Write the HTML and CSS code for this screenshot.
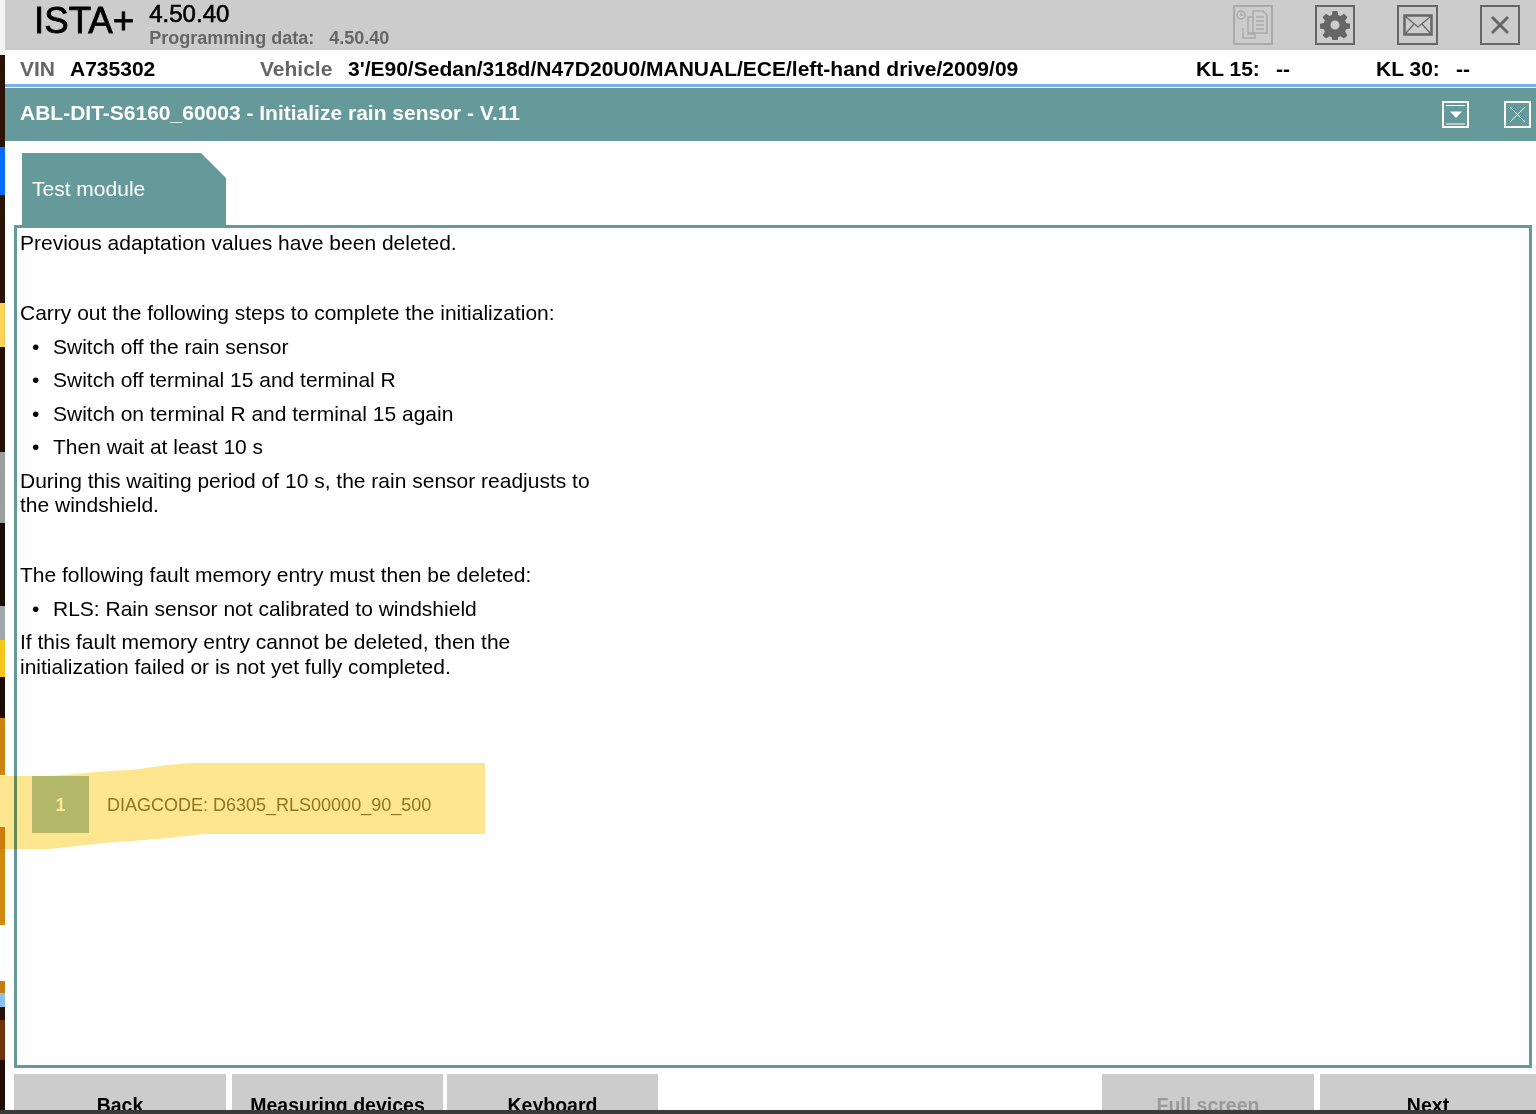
FILE: index.html
```html
<!DOCTYPE html>
<html lang="en">
<head>
<meta charset="utf-8">
<title>ISTA+</title>
<link rel="stylesheet" href="styles.css">
</head>
<body>
<div class="desktop">
  <aside class="wallpaper"></aside>
  <main class="window">
    <header class="topbar">
      <div class="brand">ISTA+</div>
      <div class="version">
        <div class="version-main">4.50.40</div>
        <div class="version-sub"><span>Programming data:</span><span>4.50.40</span></div>
      </div>
      <nav class="tools">
        <button class="tool tool-disabled" aria-label="History">
          <svg viewBox="0 0 36 36" width="36" height="36" fill="none" stroke="#aaa" stroke-width="1.5">
            <circle cx="6" cy="8" r="4"/><path d="M6 5.500V8h2.500"/>
            <path d="M18 4h10l4 4v18H18zM21 10h8M21 14h8M21 18h8M21 22h8"/>
            <path d="M18 10h-5v16h5M13 26v1h7"/>
            <path d="M8 21v10h12v-4"/>
          </svg>
        </button>
        <button class="tool" aria-label="Settings">
          <svg viewBox="0 0 32 32" width="30" height="30" fill="#666">
            <path fill-rule="evenodd" d="M13.400 1h5.200l.8 4.300 2.600 1.100 3.600-2.500 3.700 3.700-2.500 3.600 1.100 2.600 4.300.8v5.200l-4.300.8-1.100 2.600 2.500 3.600-3.700 3.700-3.600-2.500-2.600 1.100-.8 4.300h-5.200l-.8-4.300-2.600-1.100-3.600 2.500-3.700-3.700 2.500-3.600-1.100-2.600-4.300-.8v-5.200l4.300-.8 1.100-2.600-2.500-3.600 3.700-3.700 3.600 2.500 2.600-1.100zM16 11.200a4.800 4.800 0 1 0 0 9.600a4.800 4.800 0 0 0 0-9.600z"/>
          </svg>
        </button>
        <button class="tool tool-wide" aria-label="Mail">
          <svg viewBox="0 0 30 22" width="30" height="22" fill="none" stroke="#666">
            <rect x="1.500" y="1.500" width="27" height="19" stroke-width="2.500"/>
            <path d="M3 3l12 10L27 3M3 19l8-9M27 19l-8-9" stroke-width="1.200"/>
          </svg>
        </button>
        <button class="tool" aria-label="Close">
          <svg viewBox="0 0 20 20" width="20" height="20" fill="none" stroke="#666" stroke-width="3">
            <path d="M2 2l16 16M18 2L2 18"/>
          </svg>
        </button>
      </nav>
    </header>

    <section class="infobar">
      <span class="label vin-label">VIN</span><span class="value vin-value">A735302</span>
      <span class="label vehicle-label">Vehicle</span><span class="value vehicle-value">3'/E90/Sedan/318d/N47D20U0/MANUAL/ECE/left-hand drive/2009/09</span>
      <span class="value kl15">KL 15:</span><span class="value kl15-value">--</span>
      <span class="value kl30">KL 30:</span><span class="value">--</span>
    </section>

    <section class="titlebar">
      <h1 class="title">ABL-DIT-S6160_60003 - Initialize rain sensor - V.11</h1>
      <div class="title-actions">
        <span class="title-btn">
          <svg viewBox="0 0 23 23" width="23" height="23" fill="none" stroke="#fff">
            <path d="M2 2.500h19M2 21h19"/>
            <path d="M6 8.500h12l-6 6.500z" fill="#fff" stroke="none"/>
          </svg>
        </span>
        <span class="title-btn">
          <svg viewBox="0 0 23 23" width="23" height="23" fill="none" stroke="#fff">
            <path d="M4 4l15 15M19 4L4 19"/>
          </svg>
        </span>
      </div>
    </section>

    <section class="content">
      <div class="tab">Test module</div>
      <article class="panel">
        <p class="line">Previous adaptation values have been deleted.</p>
        <p class="line gap-large">Carry out the following steps to complete the initialization:</p>
        <ul class="steps">
          <li>Switch off the rain sensor</li>
          <li>Switch off terminal 15 and terminal R</li>
          <li>Switch on terminal R and terminal 15 again</li>
          <li>Then wait at least 10 s</li>
        </ul>
        <p class="line">During this waiting period of 10 s, the rain sensor readjusts to<br>the windshield.</p>
        <p class="line gap-large">The following fault memory entry must then be deleted:</p>
        <ul class="steps">
          <li>RLS: Rain sensor not calibrated to windshield</li>
        </ul>
        <p class="line">If this fault memory entry cannot be deleted, then the<br>initialization failed or is not yet fully completed.</p>
        <div class="code-row">
          <span class="code-num">1</span>
          <span class="code-text">DIAGCODE: D6305_RLS00000_90_500</span>
        </div>
      </article>
      <footer class="actions">
        <button class="action">Back</button>
        <button class="action">Measuring devices</button>
        <button class="action action-tight">Keyboard</button>
        <span class="spacer"></span>
        <button class="action action-disabled">Full screen</button>
        <button class="action action-next">Next</button>
      </footer>
    </section>
  </main>
  <svg class="highlight" viewBox="0 0 486 90" width="486" height="90">
    <path d="M0 13H48C70 12 100 8 130 7 150 5 165 1 195 0H485V71H205C185 73 160 76 130 78 100 80 70 84 48 86H0z" fill="#fde68f"/>
  </svg>
  <div class="taskbar"></div>
</div>
</body>
</html>
```

FILE: styles.css
```css
* { box-sizing: border-box; }
html, body { margin: 0; height: 100%; overflow: hidden; background: #fff; }
body { font-family: "Liberation Sans", Arial, sans-serif; color: #000; }

.desktop { position: relative; display: flex; width: 1536px; height: 1114px; overflow: hidden; }

.wallpaper {
  flex: 0 0 5px;
  background: linear-gradient(180deg,
    #f4f4f4 0 55px, #2a1206 55px 147px, #0a6cff 147px 195px, #2a1206 195px 303px,
    #ffd25a 303px 347px, #241005 347px 452px, #9aa0a0 452px 523px, #1c0b02 523px 606px,
    #a0a8aa 606px 640px, #f5c518 640px 677px, #1c0b02 677px 718px, #c98410 718px 775px,
    #fff 775px 827px, #d08a10 827px 925px, #fff 925px 981px, #c47c12 981px 993px,
    #8cc0f5 993px 1007px, #2a1206 1007px 1020px, #6a3508 1020px 1060px, #200c02 1060px 1114px);
}

.window { flex: 1; display: flex; flex-direction: column; min-width: 0; background: #fff; }

.topbar { display: flex; align-items: flex-start; flex: none; height: 50px; background: #ccc; padding-left: 29px; }
.brand { font-size: 36.700px; line-height: 42px; -webkit-text-stroke: .8px #000; margin-right: 15px; }
.version { padding-top: 2px; font-weight: bold; }
.version-main { font-size: 24px; line-height: 24px; font-weight: normal; -webkit-text-stroke: .6px #000; }
.version-sub { display: flex; gap: 15px; margin-top: 2px; font-size: 18px; line-height: 21px; color: #666; }
.tools { display: flex; gap: 42px; margin-left: auto; padding: 5px 16px 0 0; }
.tool {
  display: flex; align-items: center; justify-content: center;
  width: 40px; height: 40px; padding: 0; background: transparent;
  border: 2px solid #666;
}
.tool-wide { width: 41px; }
.tool-disabled { border-color: #aaa; }

.infobar {
  display: flex; align-items: center; flex: none; height: 38px; padding: 4px 0 3px 15px;
  font-size: 21px; font-weight: bold;
  border-bottom: 1px solid #fff;
  box-shadow: inset 0 -3px 0 #78aff0;
}
.label { color: #666; }
.vin-label { width: 50px; }
.vin-value { width: 190px; }
.vehicle-label { width: 88px; }
.vehicle-value { width: 848px; }
.kl15 { width: 80px; }
.kl15-value { width: 100px; }
.kl30 { width: 80px; }

.titlebar { display: flex; align-items: center; flex: none; height: 53px; padding: 0 5px 0 15px; background: #669999; color: #fff; }
.title { margin: 0 0 4px; font-size: 21px; font-weight: bold; }
.title-actions { display: flex; gap: 35px; margin-left: auto; }
.title-btn { display: flex; align-items: center; justify-content: center; width: 27px; height: 27px; border: 2px solid #fff; }

.content { flex: 1; display: flex; flex-direction: column; min-height: 0; padding: 12px 0 0 9px; }
.tab {
  flex: none; align-self: flex-start; width: 204px; height: 72px; margin-left: 8px; padding: 23px 0 0 10px;
  background: #669999; color: #fff; font-size: 21px; line-height: 25px;
  clip-path: polygon(0 0, 179px 0, 100% 25px, 100% 100%, 0 100%);
}
.panel {
  flex: 0 0 843px; width: 1518px; padding: 3px 3px 0; border: 3px solid #669999;
  font-size: 21px; line-height: 24.500px; background: #fff;
}
.line { margin: 0 0 9px; }
.gap-large { margin-top: 45.500px; }
.steps { list-style: none; margin: 0; padding: 0; }
.steps li { position: relative; height: 33.500px; padding-left: 33px; }
.steps li::before { content: "•"; position: absolute; left: 12px; }

.code-row { display: flex; align-items: center; margin: 97px 0 0 12px; height: 57px; }
.code-num {
  display: flex; align-items: center; justify-content: center; width: 57px; height: 57px; padding-top: 2px;
  background: #b5ccba; color: #fff; font-size: 18px; font-weight: bold;
}
.code-text { margin-left: 18px; padding-top: 2px; font-size: 18px; color: #8e8433; }

.actions { display: flex; gap: 6px; padding: 6px 0 0; flex: 1; }
.action {
  flex: none; display: block; align-self: flex-start; width: 212px; height: 63px; padding: 0;
  border: 0; background: #ccc; color: #000; text-align: center;
  font: bold 19.500px/21px "Liberation Sans", Arial, sans-serif;
}
.action:nth-child(2) { width: 211px; }
.action-tight { width: 211px; margin-left: -2px; }
.spacer { flex: 1; }
.action-disabled { color: #999; }
.action-next { width: 216px; }

.highlight { position: absolute; left: 0; top: 763px; mix-blend-mode: multiply; }
.taskbar { position: absolute; left: 0; right: 0; bottom: 0; height: 4px; background: #3a3a3a; }
```
